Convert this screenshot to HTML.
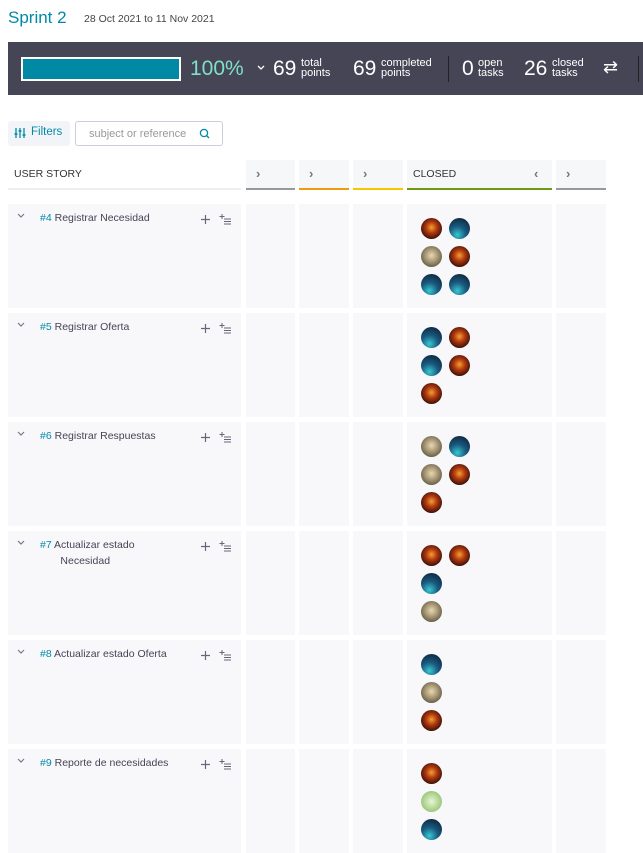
<!DOCTYPE html>
<html><head><meta charset="utf-8"><style>
*{margin:0;padding:0;box-sizing:border-box}
body{width:643px;height:846px;overflow:hidden;background:#fff;font-family:"Liberation Sans",sans-serif;position:relative;color:#333}
.abs{position:absolute}
.title{left:8px;top:8px;font-size:17px;color:#008aa8;}
.dates{left:84px;top:13px;font-size:10.5px;color:#444}
.bar{left:8px;top:42px;width:640px;height:53px;background:#464555}
.prog{left:21px;top:57px;width:160px;height:24px;border:2px solid #fff;background:#0089a5}
.w{color:#fff}
.big{font-size:21px;color:#fff}
.sm{font-size:11px;line-height:10px;color:#fff}
.sep{width:1px;height:26px;background:#222;top:56px}
.filters{left:8px;top:121px;width:62px;height:25px;background:#f3f4f7;border-radius:3px;font-size:11.5px;color:#008aa8;padding:5px 0 0 23px}
.search{left:75px;top:121px;width:148px;height:25px;border:1px solid #ccd;border-radius:3px;font-size:11px;color:#999;padding:6px 0 0 13px}
.hd{top:160px;height:30px;background:#f6f7f9}
.hdl{position:absolute;left:0;right:0;bottom:0;height:2px}
.chev{font-size:13px;font-weight:bold;color:#777;position:absolute;top:6px;left:10px}
.cell{background:#f8f8fb;position:absolute}
.story{font-size:10.5px;color:#445;line-height:16px}
.story b{font-weight:normal;color:#008aa8}
.av{position:absolute;width:21px;height:21px;border-radius:50%}
.f{background:radial-gradient(circle at 50% 45%,#f5a030 0,#b23a10 35%,#3a1008 75%)}
.b{background:radial-gradient(circle at 40% 80%,#38c8d0 0,#1a5a80 40%,#0f2c45 80%)}
.g{background:radial-gradient(circle at 50% 45%,#e8d8b0 0,#a09070 45%,#50503a 85%)}
.l{background:radial-gradient(circle,#e8f5d8 0,#a8d088 60%,#80b060 100%)}
</style></head><body>
<div class="abs title">Sprint 2</div>
<div class="abs dates">28 Oct 2021 to 11 Nov 2021</div>
<div class="abs bar"></div>
<div class="abs prog"></div>
<div class="abs" style="left:190px;top:57px;font-size:21px;color:#7fe0c8">100%</div>
<svg class="abs" style="left:257px;top:65px" width="8" height="6"><path d="M1 1l3 3 3-3" stroke="#fff" fill="none" stroke-width="1.3"/></svg>
<div class="abs big" style="left:273px;top:57px">69</div><div class="abs sm" style="left:301px;top:58px">total<br>points</div>
<div class="abs big" style="left:353px;top:57px">69</div><div class="abs sm" style="left:381px;top:58px">completed<br>points</div>
<div class="abs sep" style="left:448px"></div>
<div class="abs big" style="left:462px;top:57px">0</div><div class="abs sm" style="left:478px;top:58px">open<br>tasks</div>
<div class="abs big" style="left:524px;top:57px">26</div><div class="abs sm" style="left:552px;top:58px">closed<br>tasks</div>
<div class="abs w" style="left:603px;top:57px;font-size:18px">⇄</div>
<div class="abs sep" style="left:638px;background:#222"></div>
<div class="abs filters">Filters</div>
<svg class="abs" style="left:14px;top:127px" width="12" height="12"><path d="M2 1v10M6 1v10M10 1v10" stroke="#008aa8" stroke-width="1.3"/><path d="M0.5 7h3M4.5 4h3M8.5 8h3" stroke="#008aa8" stroke-width="1.5"/></svg>
<div class="abs search">subject or reference</div>
<svg class="abs" style="left:199px;top:128px" width="11" height="11"><circle cx="5" cy="5" r="3.6" stroke="#008aa8" stroke-width="1.3" fill="none"/><path d="M7.5 7.5l2.5 2.5" stroke="#008aa8" stroke-width="1.3"/></svg>
<div class="abs hd" style="left:8px;width:233px;background:#fff"><span style="position:absolute;left:6px;top:8px;font-size:10.5px;color:#333">USER STORY</span><div class="hdl" style="background:#eceef2"></div></div>
<div class="abs hd" style="left:246px;width:49px"><span class="chev">›</span><div class="hdl" style="background:#999"></div></div>
<div class="abs hd" style="left:299px;width:50px"><span class="chev">›</span><div class="hdl" style="background:#f09a10"></div></div>
<div class="abs hd" style="left:353px;width:50px"><span class="chev">›</span><div class="hdl" style="background:#f5c800"></div></div>
<div class="abs hd" style="left:407px;width:145px"><span style="position:absolute;left:6px;top:8px;font-size:10.5px;color:#333">CLOSED</span><span class="chev" style="left:127px">‹</span><div class="hdl" style="background:#6e9a10"></div></div>
<div class="abs hd" style="left:556px;width:50px"><span class="chev">›</span><div class="hdl" style="background:#999"></div></div>
<div id="rows"></div>
<script>
var rows=[["#4","Registrar Necesidad",[["f","b"],["g","f"],["b","b"]]],
["#5","Registrar Oferta",[["b","f"],["b","f"],["f"]]],
["#6","Registrar Respuestas",[["g","b"],["g","f"],["f"]]],
["#7","Actualizar estado<br>&nbsp;&nbsp;&nbsp;&nbsp;&nbsp;&nbsp;&nbsp;Necesidad",[["f","f"],["b"],["g"]]],
["#8","Actualizar estado Oferta",[["b"],["g"],["f"]]],
["#9","Reporte de necesidades",[["f"],["l"],["b"]]]];
var h="";
rows.forEach(function(r,i){var y=204+i*109;
h+='<div class="cell" style="left:8px;top:'+y+'px;width:233px;height:104px"></div>';
h+='<svg class="abs" style="left:17px;top:'+(y+9)+'px" width="8" height="6"><path d="M1 1l3 3 3-3" stroke="#778" fill="none" stroke-width="1.2"/></svg>';
h+='<div class="abs story" style="left:40px;top:'+(y+6)+'px">'+'<b>'+r[0]+'</b> '+r[1]+'</div>';
h+='<svg class="abs" style="left:201px;top:'+(y+11)+'px" width="9" height="9"><path d="M4.5 0v9M0 4.5h9" stroke="#667" stroke-width="1.2"/></svg>';
h+='<svg class="abs" style="left:219px;top:'+(y+10)+'px" width="13" height="11"><path d="M3 0v5M0.5 2.5h5" stroke="#667" stroke-width="1"/><path d="M5 5h7M5 7.5h7M5 10h7" stroke="#667" stroke-width="1"/></svg>';
[[246,49],[299,50],[353,50],[407,145],[556,50]].forEach(function(c){h+='<div class="cell" style="left:'+c[0]+'px;top:'+y+'px;width:'+c[1]+'px;height:104px"></div>';});
r[2].forEach(function(line,j){line.forEach(function(a,k){h+='<div class="av '+a+'" style="left:'+(421+k*28)+'px;top:'+(y+14+j*28)+'px"></div>';});});
});
document.getElementById("rows").innerHTML=h;
</script>
</body></html>
